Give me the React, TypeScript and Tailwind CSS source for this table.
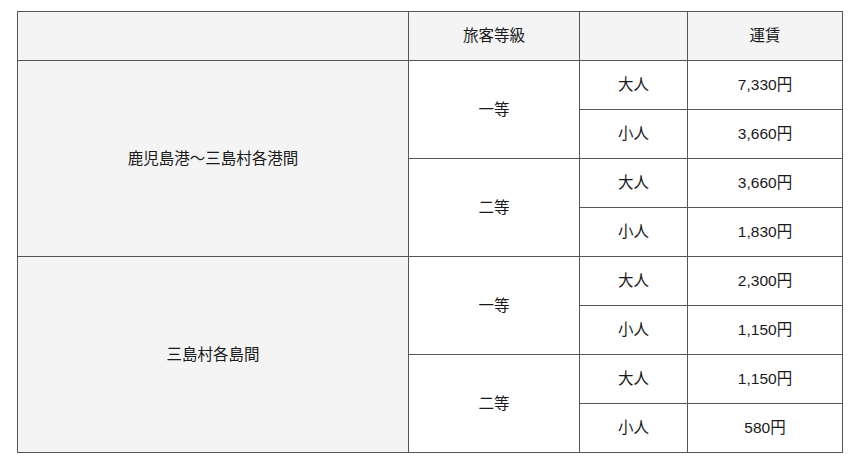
import React from 'react'

const font = { fontFamily: '"Liberation Sans", "Noto Sans CJK JP", sans-serif' }

const sections = [
  {
    route: '鹿児島港〜三島村各港間',
    grades: [
      { grade: '一等', fares: [['大人', '7,330円'], ['小人', '3,660円']] },
      { grade: '二等', fares: [['大人', '3,660円'], ['小人', '1,830円']] },
    ],
  },
  {
    route: '三島村各島間',
    grades: [
      { grade: '一等', fares: [['大人', '2,300円'], ['小人', '1,150円']] },
      { grade: '二等', fares: [['大人', '1,150円'], ['小人', '580円']] },
    ],
  },
]

const cell = 'border border-[#555] h-[49px] p-0 text-center align-middle'

export default function App() {
  return (
    <div className="min-h-screen bg-white pt-[11px] pl-[17px]" style={font}>
      <table className="table-fixed border-collapse w-[826px] text-[15.5px] text-[#1a1a1a]">
        <colgroup>
          <col className="w-[391px]" />
          <col className="w-[171px]" />
          <col className="w-[108px]" />
          <col className="w-[155px]" />
        </colgroup>
        <thead>
          <tr className="bg-[#f4f4f4]">
            <th className={`${cell} font-normal`}></th>
            <th className={`${cell} font-normal`}>旅客等級</th>
            <th className={`${cell} font-normal`}></th>
            <th className={`${cell} font-normal`}>運賃</th>
          </tr>
        </thead>
        <tbody>
          {sections.map((s) =>
            s.grades.map((g, gi) =>
              g.fares.map(([age, fare], fi) => (
                <tr key={s.route + gi + fi}>
                  {gi === 0 && fi === 0 && (
                    <td rowSpan={4} className={`${cell} bg-[#f4f4f4]`}>
                      {s.route}
                    </td>
                  )}
                  {fi === 0 && (
                    <td rowSpan={2} className={cell}>
                      {g.grade}
                    </td>
                  )}
                  <td className={cell}>{age}</td>
                  <td className={cell}>{fare}</td>
                </tr>
              ))
            )
          )}
        </tbody>
      </table>
    </div>
  )
}
